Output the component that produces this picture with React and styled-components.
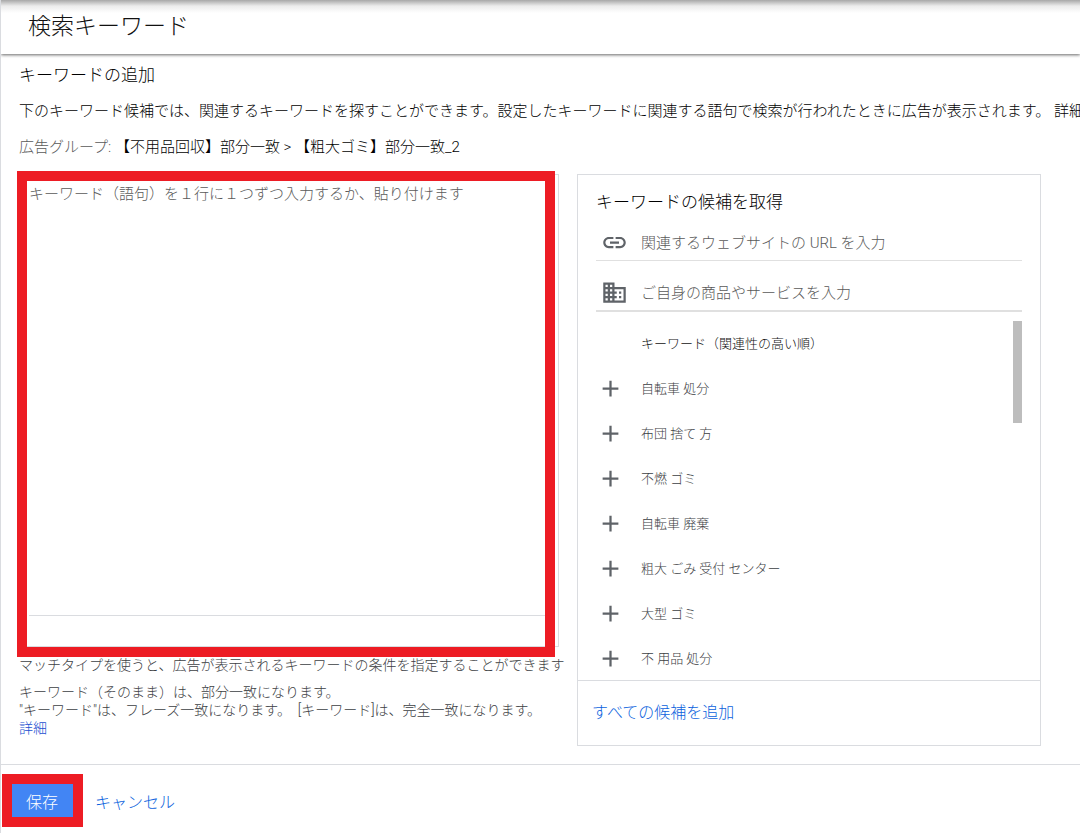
import { useState } from "react";
import styled, { createGlobalStyle } from "styled-components";
import { MdAdd, MdBusiness, MdLink } from "react-icons/md";

const suggestions = [
  "自転車 処分",
  "布団 捨て 方",
  "不燃 ゴミ",
  "自転車 廃棄",
  "粗大 ごみ 受付 センター",
  "大型 ゴミ",
  "不 用品 処分",
];

export default function App() {
  const [keywords, setKeywords] = useState("");
  const [url, setUrl] = useState("");
  const [product, setProduct] = useState("");

  const addKeywords = (words) => {
    setKeywords((prev) => (prev ? prev + "\n" : "") + words.join("\n"));
  };

  return (
    <Page>
      <GlobalStyle />
      <Header>
        <h1>検索キーワード</h1>
      </Header>
      <Main>
        <SectionTitle>キーワードの追加</SectionTitle>
        <Intro>
          下のキーワード候補では、関連するキーワードを探すことができます。設定したキーワードに関連する語句で検索が行われたときに広告が表示されます。{" "}
          <a href="#about">詳細情報</a>
        </Intro>
        <AdGroup>
          <span>広告グループ:</span> 【不用品回収】部分一致 &gt; 【粗大ゴミ】部分一致_2
        </AdGroup>
        <Columns>
          <div>
            <Editor>
              <KeywordInput
                aria-label="キーワード"
                placeholder="キーワード（語句）を１行に１つずつ入力するか、貼り付けます"
                value={keywords}
                onChange={(e) => setKeywords(e.target.value)}
              />
              <EditorFooter />
              <Highlight />
            </Editor>
            <Notes>
              <p>
                マッチタイプを使うと、広告が表示されるキーワードの条件を指定することができます
              </p>
              <p>
                キーワード（そのまま）は、部分一致になります。
                <br />
                "キーワード"は、フレーズ一致になります。&nbsp; [キーワード]は、完全一致になります。
                <br />
                <a href="#match-types">詳細</a>
              </p>
            </Notes>
          </div>
          <Panel>
            <PanelBody>
              <h2>キーワードの候補を取得</h2>
              <Field>
                <MdLink />
                <input
                  type="text"
                  aria-label="関連するウェブサイトの URL"
                  placeholder="関連するウェブサイトの URL を入力"
                  value={url}
                  onChange={(e) => setUrl(e.target.value)}
                />
              </Field>
              <Field $thick>
                <MdBusiness />
                <input
                  type="text"
                  aria-label="商品やサービス"
                  placeholder="ご自身の商品やサービスを入力"
                  value={product}
                  onChange={(e) => setProduct(e.target.value)}
                />
              </Field>
              <Suggestions>
                <ListHeading>キーワード（関連性の高い順）</ListHeading>
                <ul>
                  {suggestions.map((word) => (
                    <li key={word}>
                      <SuggestionButton
                        type="button"
                        onClick={() => addKeywords([word])}
                      >
                        <MdAdd />
                        {word}
                      </SuggestionButton>
                    </li>
                  ))}
                </ul>
                <ScrollThumb />
              </Suggestions>
            </PanelBody>
            <PanelFooter>
              <TextButton
                type="button"
                onClick={() => addKeywords(suggestions)}
              >
                すべての候補を追加
              </TextButton>
            </PanelFooter>
          </Panel>
        </Columns>
      </Main>
      <Actions>
        <SaveButton type="button">保存</SaveButton>
        <TextButton type="button" onClick={() => setKeywords("")}>
          キャンセル
        </TextButton>
      </Actions>
    </Page>
  );
}

const GlobalStyle = createGlobalStyle`
  * {
    box-sizing: border-box;
  }
  body {
    margin: 0;
    background: #fff;
  }
  body, button, input, textarea {
    font-family: Roboto, "Noto Sans CJK JP", sans-serif;
    font-weight: 300;
    text-spacing-trim: space-all;
  }
  h1, h2, p, ul {
    margin: 0;
    padding: 0;
    font-weight: 300;
  }
  ul {
    list-style: none;
  }
  button {
    border: none;
    background: none;
    padding: 0;
    cursor: pointer;
  }
  a {
    text-decoration: none;
  }
`;

const Page = styled.div`
  border-left: 1px solid #dadce0;
  overflow: hidden;
  color: #000;
`;

const Header = styled.header`
  padding: 12px 27px;
  background: linear-gradient(#a8a8a8, #ececec 6px, #fff 13px);
  box-shadow: 0 1px 3px rgba(0, 0, 0, 0.6);
  h1 {
    font-size: 23px;
    line-height: 30px;
    color: #111;
  }
`;

const Main = styled.main`
  padding: 9px 39px 18px 18px;
`;

const SectionTitle = styled.h2`
  font-size: 17px;
  line-height: 24px;
`;

const Intro = styled.p`
  margin-top: 12px;
  font-size: 15px;
  line-height: 24px;
  white-space: nowrap;
  a {
    color: inherit;
  }
`;

const AdGroup = styled.p`
  margin-top: 12px;
  font-size: 15px;
  line-height: 24px;
  span {
    color: #5a5a5a;
  }
`;

const Columns = styled.div`
  display: grid;
  grid-template-columns: minmax(0, 540fr) minmax(0, 464fr);
  align-items: start;
  gap: 18px;
  margin-top: 15px;
`;

const Editor = styled.div`
  position: relative;
  border: 1px solid #dadce0;
`;

const KeywordInput = styled.textarea`
  display: block;
  width: 100%;
  height: 440px;
  padding: 7px 9px;
  border: none;
  outline: none;
  resize: none;
  font-size: 15px;
  line-height: 24px;
  &::placeholder {
    color: #5a5a5a;
  }
`;

const EditorFooter = styled.div`
  height: 31px;
  margin: 0 9px;
  border-top: 1px solid #dadce0;
`;

/* red frame drawn over the edges of the editor */
const Highlight = styled.div`
  position: absolute;
  inset: -4px 3px -11px -3px;
  border: 10px solid #ed1c24;
  pointer-events: none;
`;

const Notes = styled.div`
  margin-top: 9px;
  font-size: 14px;
  line-height: 18px;
  color: #3c4043;
  white-space: nowrap;
  p + p {
    margin-top: 9px;
  }
  a {
    color: #1a4fd0;
  }
`;

const Panel = styled.section`
  border: 1px solid #dadce0;
`;

const PanelBody = styled.div`
  padding: 15px 18px 0;
  h2 {
    margin-bottom: 9px;
    font-size: 17px;
    line-height: 24px;
  }
`;

const Field = styled.label`
  display: flex;
  align-items: center;
  gap: 13px;
  padding: 6px 0 4px 5px;
  border-bottom: ${(props) => (props.$thick ? "2px" : "1px")} solid #e0e0e0;
  & + & {
    margin-top: 12px;
  }
  svg {
    flex: none;
    width: 27px;
    height: 27px;
    color: #5f6368;
  }
  input {
    flex: 1;
    min-width: 0;
    height: 24px;
    padding: 0;
    border: none;
    outline: none;
    font-size: 15px;
    &::placeholder {
      color: #5a5a5a;
    }
  }
`;

const Suggestions = styled.div`
  position: relative;
  height: 359px;
  margin-top: 9px;
  overflow: hidden;
`;

const ListHeading = styled.p`
  padding-left: 45px;
  font-size: 13px;
  line-height: 45px;
  color: #111;
`;

const SuggestionButton = styled.button`
  display: flex;
  align-items: center;
  gap: 17px;
  width: 100%;
  height: 45px;
  padding-left: 1px;
  font-size: 13px;
  line-height: 45px;
  color: #3c4043;
  svg {
    width: 27px;
    height: 27px;
    color: #5f6368;
  }
`;

const ScrollThumb = styled.div`
  position: absolute;
  top: 0;
  right: 0;
  width: 9px;
  height: 102px;
  background: #bdbdbd;
`;

const PanelFooter = styled.div`
  padding: 20px 14px;
  border-top: 1px solid #dadce0;
`;

const TextButton = styled.button`
  font-size: 16px;
  line-height: 24px;
  color: #0b62dd;
`;

const Actions = styled.footer`
  display: flex;
  align-items: baseline;
  gap: 22px;
  padding: 19px 11px 16px;
  border-top: 1px solid #dadce0;
`;

const SaveButton = styled.button`
  height: 33px;
  padding: 0 15px 0 14px;
  outline: 10px solid #ed1c24;
  background: #4285f4;
  color: #fff;
  font-size: 16px;
`;
